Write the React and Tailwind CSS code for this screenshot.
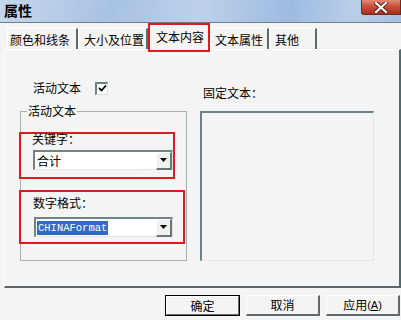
export default function App() {
  const tab = "h-[21px] border-t border-l border-white border-r-2 border-r-[#5b6b6b] pt-[4px] leading-[14px] whitespace-nowrap";

  return (
    <div className="w-[401px] h-[320px] overflow-hidden bg-[#f4f4f4] flex flex-col text-[12px] text-black font-['Noto_Sans_CJK_SC','Liberation_Sans',sans-serif]">
      {/* 标题栏 */}
      <div className="h-[23px] shrink-0 flex justify-between border-b border-[#6d7d8d] bg-[linear-gradient(100deg,#c6d7ec_0%,#a8c2e2_28%,#bdd1e9_50%,#9dbbe0_72%,#b9cee8_88%,#a5c0e2_100%)]">
        <span className="pl-[4px] pt-[2px] text-[14px] font-bold leading-[17px]">属性</span>
        <div className="mr-[0px] w-[40px] h-[15px] rounded-bl-[3px] border border-[#6a2a20] border-t-0 bg-[linear-gradient(180deg,#e08a74_0%,#c9503a_45%,#a8301e_100%)] flex items-center justify-center">
          <svg width="14" height="11" viewBox="0 0 14 11">
            <path d="M2 1 L12 10 M12 1 L2 10" stroke="#5a2018" strokeWidth="4" strokeLinecap="square" />
            <path d="M2 1 L12 10 M12 1 L2 10" stroke="#ffffff" strokeWidth="2.2" strokeLinecap="square" />
          </svg>
        </div>
      </div>

      {/* 选项卡 */}
      <div className="h-[26px] shrink-0 flex items-end pl-[7px]">
        <div className={`${tab} w-[71px] pl-[2px]`}>颜色和线条</div>
        <div className={`${tab} w-[70px] pl-[5px]`}>大小及位置</div>
        <div className="relative z-10 w-[62px] h-[29px] mb-[-3px] border-2 border-[#dc1c1c] bg-[#f4f4f4] pt-[5px] pl-[6px] leading-[14px] whitespace-nowrap">文本内容</div>
        <div className={`${tab} w-[59px] pl-[4px]`}>文本属性</div>
        <div className={`${tab} w-[48px] pl-[5px]`}>其他</div>
      </div>

      {/* 内容面板 */}
      <div className="ml-[4px] w-[397px] h-[239px] shrink-0 border-t border-l border-white border-r-2 border-b-2 border-r-[#4f6c6c] border-b-[#56686a] flex pl-[15px]">
        {/* 左列 */}
        <div className="w-[167px] flex flex-col">
          <div className="mt-[31px] h-[14px] flex items-center pl-[13px] gap-[14px] leading-[14px]">
            <span>活动文本</span>
            <div className="w-[13px] h-[13px] bg-white border-t-2 border-l-2 border-[#6b7f7f] border-r border-b border-r-[#dcdcdc] border-b-[#dcdcdc] flex items-center justify-center">
              <svg width="9" height="9" viewBox="0 0 9 9">
                <path d="M1 4 L3.5 6.5 L8 1.5" stroke="#000" strokeWidth="1.8" fill="none" />
              </svg>
            </div>
          </div>

          <div className="mt-[16px] w-[167px] h-[150px] border border-[#a3b1b1] flex flex-col">
            <span className="-mt-[8px] ml-[6px] px-[1px] w-fit bg-[#f4f4f4] leading-[14px]">活动文本</span>

            <div className="mt-[14px] -ml-[2px] w-[156px] h-[47px] border-2 border-[#dc1c1c] flex flex-col">
              <span className="-mt-[2px] ml-[11px] leading-[14px]">关键字：</span>
              <div className="mt-[4px] ml-[12px] w-[140px] h-[20px] bg-white border-t-2 border-l-2 border-[#6f8585] border-r border-b border-r-[#e2e2e2] border-b-[#e2e2e2] flex items-center justify-between">
                <span className="pl-[2px] leading-[14px]">合计</span>
                <DropButton />
              </div>
            </div>

            <div className="mt-[11px] -ml-[2px] w-[166px] h-[54px] border-2 border-[#dc1c1c] flex flex-col">
              <span className="mt-[4px] ml-[12px] leading-[14px]">数字格式：</span>
              <div className="mt-[7px] ml-[13px] w-[139px] h-[20px] bg-white border-t-2 border-l-2 border-[#6f8585] border-r border-b border-r-[#e2e2e2] border-b-[#e2e2e2] flex items-center justify-between">
                <span className="ml-[1px] px-[1px] bg-[#3169c6] text-white leading-[14px] text-[10.5px] font-['Liberation_Mono',monospace]">CHINAFormat</span>
                <DropButton />
              </div>
            </div>
          </div>
        </div>

        {/* 右列 */}
        <div className="ml-[13px] flex flex-col">
          <span className="mt-[36px] pl-[3px] leading-[14px]">固定文本：</span>
          <div className="mt-[11px] w-[174px] h-[150px] border-t-2 border-l-2 border-[#6b8080] border-r border-b border-r-[#e4e4e4] border-b-[#e4e4e4]"></div>
        </div>
      </div>

      {/* 按钮 */}
      <div className="mt-[7px] flex justify-end gap-[6px] pr-[1px]">
        <div className="w-[75px] h-[21px] border border-black">
          <div className="w-full h-full border-t border-l border-white border-r border-b border-r-[#6a6a6a] border-b-[#6a6a6a] flex items-center justify-center leading-[14px]">确定</div>
        </div>
        <Btn>取消</Btn>
        <Btn>
          应用<span className="font-['Liberation_Sans',sans-serif] text-[11px]">(<span className="underline">A</span>)</span>
        </Btn>
      </div>
    </div>
  );
}

function Btn({ children }) {
  return (
    <div className="w-[74px] h-[21px] border-t border-l border-white border-r-2 border-b-2 border-r-[#5c6a6a] border-b-[#5c6a6a] flex items-center justify-center leading-[14px]">
      {children}
    </div>
  );
}

function DropButton() {
  return (
    <div className="w-[16px] h-[18px] bg-[#f0f0f0] border-t border-l border-white border-r-2 border-b-2 border-r-[#667777] border-b-[#667777] flex items-center justify-center">
      <svg width="7" height="4" viewBox="0 0 7 4">
        <path d="M0 0 L7 0 L3.5 4 Z" fill="#000" />
      </svg>
    </div>
  );
}
